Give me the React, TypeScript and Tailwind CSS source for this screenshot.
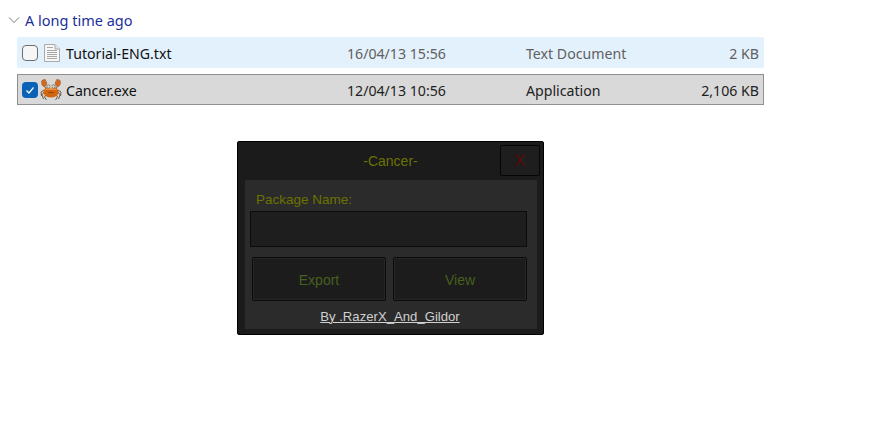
import React from 'react';

const Crab = () => (
  <svg width="22" height="22" viewBox="0 0 22 22" className="shrink-0">
    <g stroke="#6b5a48" strokeWidth="1" fill="none">
      <path d="M4 11 L1 13 L1.500 17" />
      <path d="M4 13 L2 16 L3.500 20" />
      <path d="M6 15 L4.500 18 L6.500 21" />
      <path d="M18 11 L21 13 L20.500 17" />
      <path d="M18 13 L20 16 L18.500 20" />
      <path d="M16 15 L17.500 18 L15.500 21" />
      <path d="M4.500 7 L6 10" />
      <path d="M17.500 7 L16 10" />
    </g>
    <path d="M1.500 3 C1.500 0.500 4.500 0 6 1 L4.500 3.500 L6.500 2.500 C7.500 5 6 7.500 4 7.500 C2.500 7.500 1.500 5.500 1.500 3 Z" fill="#d9681c" stroke="#8a5a30" strokeWidth="0.500" />
    <path d="M20.500 3 C20.500 0.500 17.500 0 16 1 L17.500 3.500 L15.500 2.500 C14.500 5 16 7.500 18 7.500 C19.500 7.500 20.500 5.500 20.500 3 Z" fill="#d9681c" stroke="#8a5a30" strokeWidth="0.500" />
    <ellipse cx="11" cy="13" rx="7.500" ry="5.500" fill="#d4650f" />
    <path d="M5 11 C7 8 15 8 17 11 C15 10.500 7 10.500 5 11 Z" fill="#ee9a50" />
    <circle cx="8.500" cy="7.500" r="1.700" fill="#dedad0" stroke="#6b5a48" strokeWidth="0.700" />
    <circle cx="13.500" cy="7.500" r="1.700" fill="#dedad0" stroke="#6b5a48" strokeWidth="0.700" />
    <circle cx="11" cy="8" r="1.200" fill="#c9c4b8" />
    <path d="M8.500 13.500 H13.500" stroke="#8a3f08" strokeWidth="1" />
  </svg>
);

const FileIcon = () => (
  <svg width="16" height="18" viewBox="0 0 16 18" className="shrink-0">
    <path d="M0.500 0.500 H11 L15.500 5 V17.500 H0.500 Z" fill="#f7f7f7" stroke="#ababab" />
    <path d="M11 0.500 V5 H15.500" fill="#e6e6e6" stroke="#ababab" />
    <path d="M3 3.500 H9 M3 6.500 H13 M3 8.500 H13 M3 10.500 H13 M3 12.500 H13 M3 14.500 H13" stroke="#a8a8a8" strokeWidth="1" />
  </svg>
);

const DarkButton = ({ label }: { label: string }) => (
  <button className="h-[44px] flex-1 rounded-[2px] border border-[#0a0a0a] bg-[#1c1c1c] pt-[2px] text-[14px] text-[#46601e] outline outline-1 -outline-offset-2 outline-[#262626]">
    {label}
  </button>
);

const App: React.FC = () => {
  return (
    <div className="h-[435px] w-[885px] overflow-hidden bg-white pt-[9px] font-['Noto_Sans','Open_Sans',sans-serif] text-[14.15px] leading-[20px]">
      <div className="flex h-[21px] items-center pl-[8px] text-[14.5px] text-[#1c2f9c]">
        <svg width="12" height="12" viewBox="0 0 12 12" className="mr-[5px]">
          <path d="M1 3.500 L6 8.500 L11 3.500" fill="none" stroke="#7a7a7a" strokeWidth="1" />
        </svg>
        A long time ago
      </div>

      <div className="ml-[17px] mt-[7px] flex h-[31px] w-[747px] items-center rounded-[2px] bg-[#e3f1fc] pt-[2px]">
        <span className="mb-[2px] ml-[5px] h-[16px] w-[16px] shrink-0 rounded-[4px] border border-[#6e6e6e] bg-[#f6f6f6]" />
        <span className="mb-[2px] ml-[6px] w-[17px] shrink-0"><FileIcon /></span>
        <span className="ml-[5px] w-[281px] text-[#111]">Tutorial-ENG.txt</span>
        <span className="w-[179px] text-[#5f5f5f]">16/04/13 15:56</span>
        <span className="w-[150px] text-[#5f5f5f]">Text Document</span>
        <span className="w-[83px] text-right text-[#5f5f5f]">2 KB</span>
      </div>

      <div className="ml-[17px] mt-[6px] flex h-[31px] w-[747px] items-center border border-[#8f8f8f] bg-[#d9d9d9] pt-[2px]">
        <span className="mb-[2px] ml-[4px] flex h-[16px] w-[16px] shrink-0 items-center justify-center rounded-[4px] bg-[#0a62b8]">
          <svg width="10" height="10" viewBox="0 0 10 10">
            <path d="M1.500 5.500 L4 8 L8.500 2.500" fill="none" stroke="#fff" strokeWidth="1.200" />
          </svg>
        </span>
        <span className="mb-[2px] ml-[2px] w-[22px] shrink-0"><Crab /></span>
        <span className="ml-[4px] w-[281px] text-[#111]">Cancer.exe</span>
        <span className="w-[179px] text-[#222]">12/04/13 10:56</span>
        <span className="w-[150px] text-[#222]">Application</span>
        <span className="w-[83px] text-right text-[#222]">2,106 KB</span>
      </div>

      {/* dark dialog */}
      <div className="ml-[237px] mt-[36px] flex h-[194px] w-[307px] flex-col rounded-[2px] border border-black bg-[#1b1b1b] pb-[5px] pl-[7px] pr-[6px] font-['Liberation_Sans',sans-serif]">
        <div className="relative flex h-[38px] shrink-0 items-center justify-center pr-[1px] text-[14px] text-[#6b7300]">
          -Cancer-
          <button className="absolute right-[-3px] top-[3px] h-[31px] w-[40px] rounded-[2px] border border-[#050505] bg-[#1e1e1e] text-[16px] text-[#5c0a0a]">
            X
          </button>
        </div>
        <div className="flex flex-1 flex-col bg-[#2b2b2b] pl-[5px]">
          <div className="h-[31px] shrink-0 pl-[6px] pt-[10px] text-[13.5px] leading-[20px] text-[#6b7300]">Package Name:</div>
          <div className="h-[36px] w-[277px] shrink-0 border border-[#0c0c0c] bg-[#1e1e1e]" />
          <div className="ml-[2px] mt-[10px] flex w-[275px] gap-[7px]">
            <DarkButton label="Export" />
            <DarkButton label="View" />
          </div>
          <div className="mt-[6px] pr-[7px] text-center text-[13.15px] leading-[20px] text-[#d0d0d0] underline decoration-[1px]">By .RazerX_And_Gildor</div>
        </div>
      </div>
    </div>
  );
};

export default App;
